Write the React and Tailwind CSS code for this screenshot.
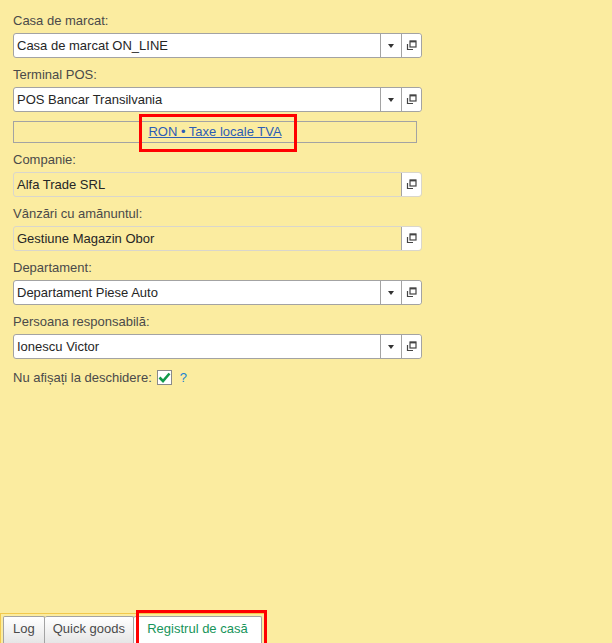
const fields = [
  { label: "Casa de marcat:", value: "Casa de marcat ON_LINE", dropdown: true },
  { label: "Terminal POS:", value: "POS Bancar Transilvania", dropdown: true },
];

const fields2 = [
  { label: "Companie:", value: "Alfa Trade SRL", readOnly: true },
  { label: "Vânzări cu amănuntul:", value: "Gestiune Magazin Obor", readOnly: true },
  { label: "Departament:", value: "Departament Piese Auto", dropdown: true },
  { label: "Persoana responsabilă:", value: "Ionescu Victor", dropdown: true },
];

function OpenIcon() {
  return (
    <svg width="11" height="11" viewBox="0 0 11 11" fill="none">
      <rect x="4" y="1" width="6" height="6" stroke="#444" strokeWidth="1.2" />
      <line x1="4" y1="1.6" x2="10" y2="1.6" stroke="#444" strokeWidth="1.6" />
      <path d="M1.5 4 V9.5 H7" stroke="#444" strokeWidth="1.2" />
    </svg>
  );
}

function Field({ label, value, dropdown, readOnly }) {
  return (
    <div className="flex flex-col">
      <div className="h-4 leading-4 text-[13px] text-[#4a4a4a]">{label}</div>
      <div
        className={`mt-1 flex h-[25px] w-[409px] rounded-[3px] border ${
          readOnly ? "border-[#d9d6cc] bg-transparent" : "border-[#a3a3a3] bg-white"
        }`}
      >
        <div className="flex flex-1 items-center pl-[3px] text-[13px] text-[#262626]">
          {value}
        </div>
        {dropdown && (
          <div className="flex w-[21px] items-center justify-center border-l border-[#a3a3a3] bg-white">
            <div className="h-0 w-0 border-x-[3px] border-t-[4px] border-x-transparent border-t-[#333]" />
          </div>
        )}
        <div className="flex w-[20px] items-center justify-center rounded-r-[3px] border-l border-[#a3a3a3] bg-white">
          <OpenIcon />
        </div>
      </div>
    </div>
  );
}

export default function App() {
  return (
    <div
      className="flex h-[643px] w-[612px] flex-col overflow-hidden bg-[#fbeca0]"
      style={{ fontFamily: '"Liberation Sans", Arial, sans-serif' }}
    >
      <div className="flex flex-col gap-[9px] pl-[13px] pt-[13px]">
        {fields.map((f) => (
          <Field key={f.label} {...f} />
        ))}
        <div className="relative flex h-[22px] w-[404px] items-center justify-center border border-[#a3a3a3]">
          <a href="#" className="text-[13px] text-[#2d5db5] underline">
            RON • Taxe locale TVA
          </a>
          <div className="pointer-events-none absolute left-[125px] top-[-8px] h-[38px] w-[158px] border-[3px] border-[#ff0000]" />
        </div>
      </div>
      <div className="mt-[9px] flex flex-col gap-[9px] pl-[13px]">
        {fields2.map((f) => (
          <Field key={f.label} {...f} />
        ))}
        <div className="flex items-center text-[13px]">
          <span className="text-[#4a4a4a]">Nu afișați la deschidere:</span>
          <span className="ml-[5px] flex h-[15px] w-[15px] items-center justify-center border border-[#8a8a8a] bg-white">
            <svg width="13" height="11" viewBox="0 0 13 11">
              <path d="M1.5 5.5 L5 9 L11.5 1.5" stroke="#119a4a" strokeWidth="2.6" fill="none" />
            </svg>
          </span>
          <span className="ml-[8px] text-[#1a82d0]">?</span>
        </div>
      </div>

      <div className="relative mt-auto flex h-[30px] w-[266px] items-end border-l border-t border-r border-[#f2c94c] pl-[2px]">
        <div className="flex h-[27px] items-center rounded-t-[2px] border border-b-0 border-[#a3a3a3] bg-gradient-to-b from-white to-[#e6e6e6] px-[9px] pb-[2px] text-[13px] text-[#4a4a4a]">
          Log
        </div>
        <div className="flex h-[27px] items-center rounded-t-[2px] border border-b-0 border-l-0 border-[#a3a3a3] bg-gradient-to-b from-white to-[#e6e6e6] px-[8px] pb-[2px] text-[13px] text-[#4a4a4a]">
          Quick goods
        </div>
        <div className="flex h-[27px] w-[128px] items-center justify-center rounded-t-[2px] border border-b-0 border-l-0 border-[#a3a3a3] bg-white pb-[2px] text-[13px] text-[#16945a]">
          Registrul de casă
        </div>
        <div className="pointer-events-none absolute left-[135px] top-[-4px] h-[36px] w-[131px] border-[3px] border-[#ff0000]" />
      </div>
    </div>
  );
}
